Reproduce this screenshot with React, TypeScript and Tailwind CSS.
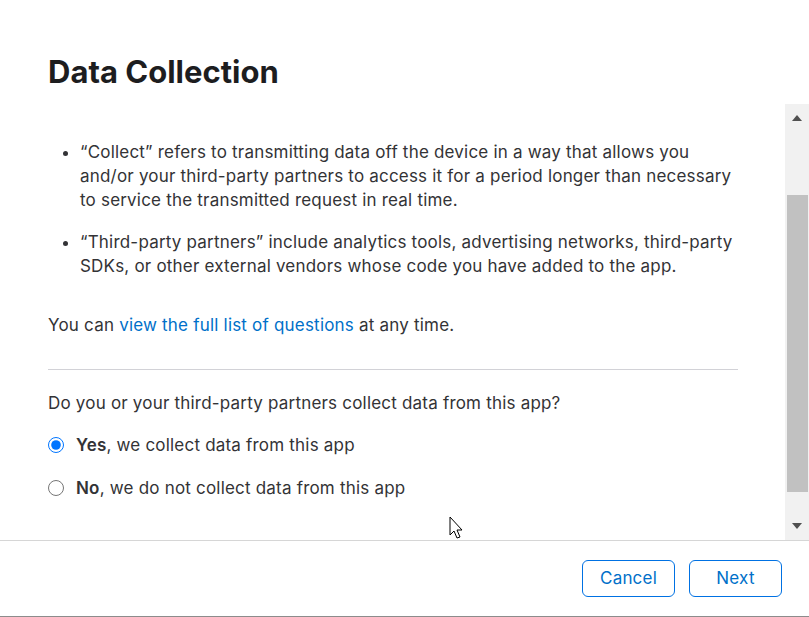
import React from "react";

function Arrow({ dir }: { dir: "up" | "down" }) {
  return (
    <div className="flex h-[28px] items-center justify-center">
      <svg width="10" height="6" viewBox="0 0 10 6">
        {dir === "up" ? <path d="M0 6 L5 0 L10 6 Z" fill="#505050" /> : <path d="M0 0 L5 6 L10 0 Z" fill="#505050" />}
      </svg>
    </div>
  );
}

export default function App() {
  return (
    <div
      className="relative flex h-[617px] w-[809px] flex-col overflow-hidden border-b border-[#8c8c8c] bg-white text-[#333336]"
      style={{ fontFamily: "Inter, 'Noto Sans', sans-serif" }}
    >
      <header className="h-[104px] shrink-0 px-12 pt-[53px]">
        <h1 className="text-[31px] font-bold leading-[38px] text-[#1d1d1f]">Data Collection</h1>
      </header>

      <div className="flex h-[436px] shrink-0">
        <div className="flex-1 overflow-hidden pl-12 pr-[47px] pt-[36px] text-[17px] leading-6 tracking-[0.2px]">
          <ul className="list-disc space-y-[18px] pl-[32px] marker:text-[#333336]">
            <li>
              “Collect” refers to transmitting data off the device in a way that allows you and/or your third-party
              partners to access it for a period longer than necessary to service the transmitted request in real time.
            </li>
            <li>
              “Third-party partners” include analytics tools, advertising networks, third-party SDKs, or other external
              vendors whose code you have added to the app.
            </li>
          </ul>

          <p className="mt-[35px]">
            You can <a className="text-[#0070c9]">view the full list of questions</a> at any time.
          </p>

          <div className="mt-[32px] border-t border-[#d2d2d7]" />

          <p className="mt-[21px]">Do you or your third-party partners collect data from this app?</p>

          <div className="mt-[18px] flex flex-col gap-[19px]">
            <label className="flex items-center gap-[12px]">
              <input type="radio" name="collect" defaultChecked className="m-0 h-4 w-4 accent-[#0075ff]" />
              <span>
                <b className="font-semibold">Yes</b>, we collect data from this app
              </span>
            </label>
            <label className="flex items-center gap-[12px]">
              <input type="radio" name="collect" className="m-0 h-4 w-4 accent-[#0075ff]" />
              <span>
                <b className="font-semibold">No</b>, we do not collect data from this app
              </span>
            </label>
          </div>
        </div>

        <div className="flex w-[24px] shrink-0 flex-col bg-[#f1f1f1]">
          <Arrow dir="up" />
          <div className="h-[63px]" />
          <div className="ml-[2px] mr-[1px] h-[297px] bg-[#c1c1c1]" />
          <div className="flex-1" />
          <Arrow dir="down" />
        </div>
      </div>

      <footer className="flex flex-1 justify-end gap-[14px] border-t border-[#d6d6d6] pr-[27px] pt-[19px]">
        <button className="h-[37px] w-[93px] rounded-[6px] border border-[#0071e3] text-[17px] tracking-[0.2px] text-[#0070c9]">
          Cancel
        </button>
        <button className="h-[37px] w-[93px] rounded-[6px] border border-[#0071e3] text-[17px] tracking-[0.2px] text-[#0070c9]">
          Next
        </button>
      </footer>

      <svg className="absolute left-[449px] top-[516px]" width="14" height="24" viewBox="0 0 14 24">
        <path d="M1 1 L1 19 L5 15 L8 22 L11 21 L8 14 L13 14 Z" fill="white" stroke="black" strokeWidth="1" strokeLinejoin="round" />
      </svg>
    </div>
  );
}
